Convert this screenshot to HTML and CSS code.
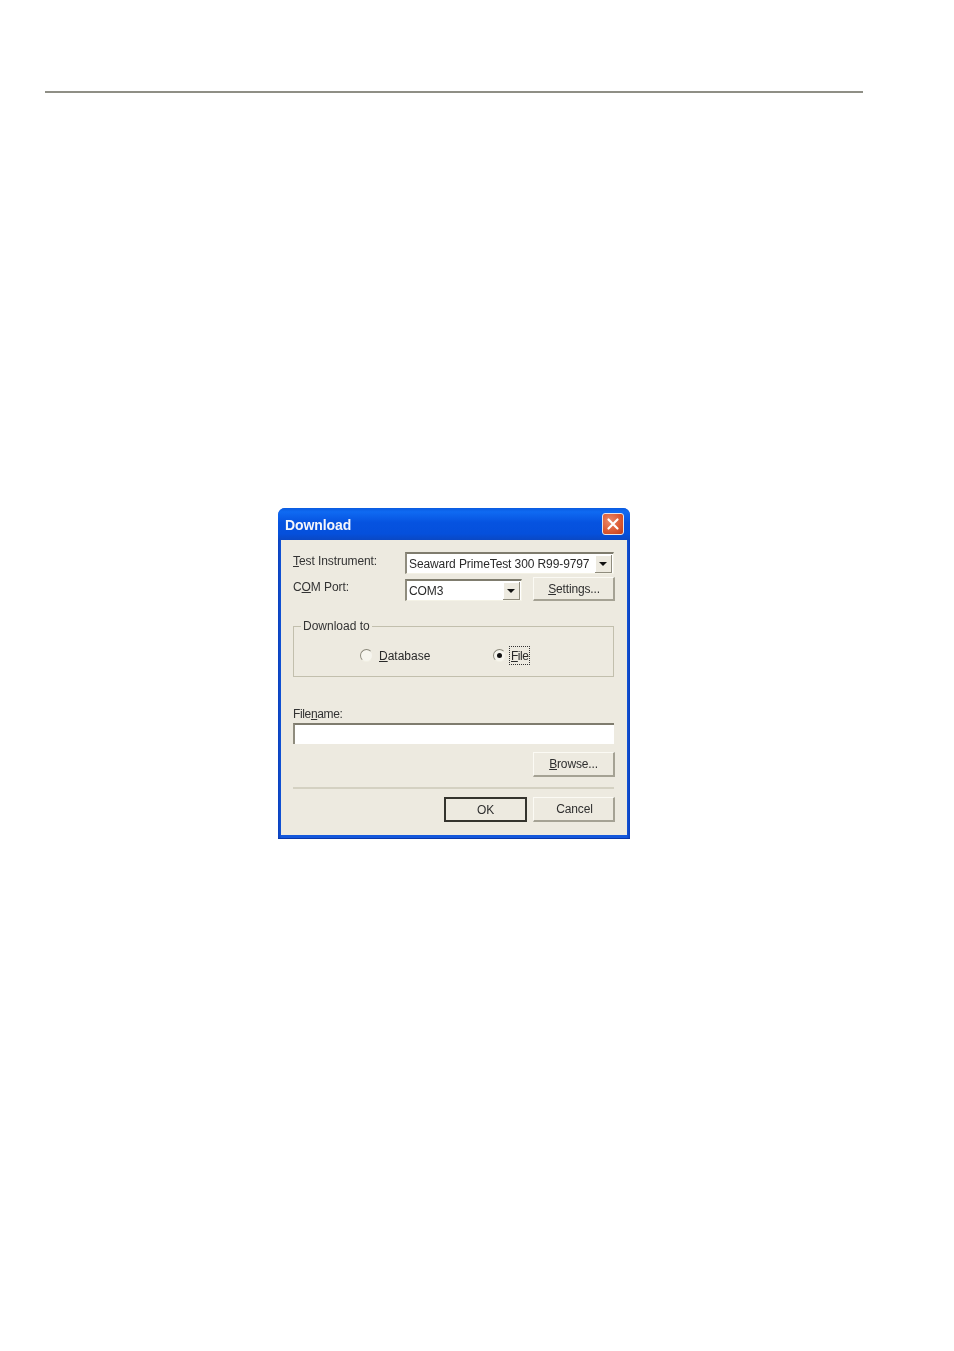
FILE: index.html
```html
<!DOCTYPE html>
<html lang="en">
<head>
    <meta charset="UTF-8">
    <title>Download</title>
    <link rel="stylesheet" href="styles.css">
</head>
<body>
    <div class="rule"></div>

    <div class="dialog">
        <div class="titlebar">
            <span class="title">Download</span>
            <div class="close">
                <svg width="14" height="14" viewBox="0 0 14 14">
                    <path d="M2.5 2.5 L11.5 11.5 M11.5 2.5 L2.5 11.5" stroke="#fff" stroke-width="2.2" stroke-linecap="round"/>
                </svg>
            </div>
        </div>

        <div class="panel">
            <div class="row first">
                <label class="label"><u>T</u>est Instrument:</label>
                <div class="combo wide">
                    <span class="combo-text">Seaward PrimeTest 300 R99-9797</span>
                    <span class="arrow"></span>
                </div>
            </div>
            <div class="row second">
                <label class="label">C<u>O</u>M Port:</label>
                <div class="combo narrow">
                    <span class="combo-text">COM3</span>
                    <span class="arrow"></span>
                </div>
                <button class="btn settings"><u>S</u>ettings...</button>
            </div>

            <fieldset class="group">
                <legend>Download to</legend>
                <div class="radios">
                    <div class="radio-item database">
                        <span class="radio"></span>
                        <span class="radio-label"><u>D</u>atabase</span>
                    </div>
                    <div class="radio-item">
                        <span class="radio checked"></span>
                        <span class="focused"><u>F</u>ile</span>
                    </div>
                </div>
            </fieldset>

            <label class="label filename">File<u>n</u>ame:</label>
            <div class="textbox"></div>

            <div class="actions browse">
                <button class="btn"><u>B</u>rowse...</button>
            </div>

            <div class="separator"></div>

            <div class="actions footer">
                <button class="btn default">OK</button>
                <button class="btn cancel">Cancel</button>
            </div>
        </div>
    </div>
</body>
</html>
```

FILE: styles.css
```css
* {
    margin: 0;
    padding: 0;
    box-sizing: border-box;
}

body {
    background: white;
    font-family: "Liberation Sans", Arial, sans-serif;
    font-size: 12px;
    color: #2a2a2a;
    padding-top: 91px;
    padding-left: 45px;
}

.rule {
    width: 818px;
    height: 2px;
    background: #8f8f86;
}

.dialog {
    width: 352px;
    height: 331px;
    margin-top: 415px;
    margin-left: 233px;
    padding: 0 3px 3px;
    background: linear-gradient(90deg, #0a3fbc 0%, #1458dc 1%, #1458dc 99%, #0a3fbc 100%);
    border-bottom: 1px solid #0a37a8;
    border-radius: 7px 7px 0 0;
    filter: blur(0.4px);
}

.titlebar {
    display: flex;
    align-items: center;
    justify-content: space-between;
    height: 32px;
    margin: 0 -3px;
    padding: 0 6px 0 7px;
    border-radius: 7px 7px 0 0;
    background: linear-gradient(180deg, #0a5be0 0%, #0f6af2 12%, #0653e0 45%, #0550dc 80%, #0a48c4 100%);
}

.title {
    padding-top: 2px;
    color: #f4f6fb;
    font-size: 14px;
    font-weight: bold;
    letter-spacing: -0.1px;
}

.close {
    display: flex;
    align-items: center;
    justify-content: center;
    width: 22px;
    height: 22px;
    border: 1px solid #e8e4e8;
    border-radius: 3px;
    background: radial-gradient(circle at 35% 35%, #ea8a6c 0%, #dc5b34 55%, #c23c18 100%);
}

.panel {
    height: 295px;
    padding: 12px 12px 13px;
    background: #edeae0;
}

.row {
    display: flex;
}

.first {
    align-items: flex-start;
    height: 22px;
}

.second {
    align-items: flex-end;
    height: 24px;
    margin-top: 3px;
}

.label {
    display: block;
    width: 112px;
    line-height: 14px;
    letter-spacing: -0.08px;
    color: #333;
}

.first .label {
    margin-top: 2px;
}

.second .label {
    margin-bottom: 7px;
}

.combo {
    display: flex;
    align-items: center;
    justify-content: space-between;
    height: 22px;
    padding: 0 1px 0 2px;
    background: white;
    border-top: 2px solid #7f7c6e;
    border-left: 2px solid #8f8c7e;
    border-right: 1px solid #f4f2e6;
    border-bottom: 1px solid #f4f2e6;
}

.wide {
    width: 209px;
}

.narrow {
    width: 117px;
}

.combo-text {
    line-height: 18px;
    letter-spacing: -0.1px;
    color: #2a2a2a;
    white-space: nowrap;
}

.arrow {
    position: relative;
    flex: none;
    width: 17px;
    height: 18px;
    background: #edeae0;
    box-shadow: inset -1px -1px 0 #8f8c7e, inset 1px 1px 0 #fff;
}

.arrow::after {
    content: "";
    position: absolute;
    left: 4px;
    top: 7px;
    border-left: 4px solid transparent;
    border-right: 4px solid transparent;
    border-top: 4px solid #111;
}

.btn {
    width: 82px;
    height: 25px;
    font-family: inherit;
    font-size: 12px;
    letter-spacing: -0.15px;
    color: #2f2f2f;
    background: #edeae0;
    border: none;
    border-right: 2px solid #a5a294;
    border-bottom: 2px solid #a5a294;
    border-top: 1px solid #fbfaf4;
    border-left: 1px solid #fbfaf4;
}

.settings {
    height: 24px;
    margin-left: 11px;
    padding-left: 1px;
}

.cancel {
    padding-left: 2px;
}

.default {
    width: 83px;
    border: 2px solid #35342e;
}

.group {
    margin-top: 18px;
    margin-right: 1px;
    padding: 15px 0 14px;
    border: 1px solid #c2bfad;
}

.group legend {
    margin-left: 7px;
    padding: 0 2px;
    line-height: 14px;
    color: #333;
}

.radios {
    display: flex;
    height: 14px;
    padding-left: 66px;
}

.radio-item {
    display: flex;
    align-items: center;
    gap: 6px;
    line-height: 14px;
}

.database {
    width: 133px;
}

.radio-label {
    padding-top: 2px;
}

.radio {
    position: relative;
    flex: none;
    width: 13px;
    height: 13px;
    border-radius: 50%;
    background: #f6f5ee;
    border: 1px solid;
    border-color: #8a887b #edeae0 #f2f0e4 #8a887b;
}

.checked::after {
    content: "";
    position: absolute;
    left: 3px;
    top: 3px;
    width: 5px;
    height: 5px;
    border-radius: 50%;
    background: #111;
}

.focused {
    margin-left: -2px;
    padding: 2px 1px 0;
    outline: 1px dotted #333;
    line-height: 15px;
    letter-spacing: -0.5px;
}

.filename {
    width: auto;
    margin-top: 30px;
    letter-spacing: -0.35px;
}

.textbox {
    height: 21px;
    margin-top: 2px;
    margin-right: 1px;
    background: white;
    border-top: 2px solid #7f7c6e;
    border-left: 2px solid #8f8c7e;
}

.actions {
    display: flex;
    justify-content: flex-end;
    gap: 6px;
}

.browse {
    margin-top: 8px;
}

.separator {
    height: 2px;
    margin-top: 10px;
    margin-right: 1px;
    background: #d4d1c2;
}

.footer {
    margin-top: 8px;
}
```
